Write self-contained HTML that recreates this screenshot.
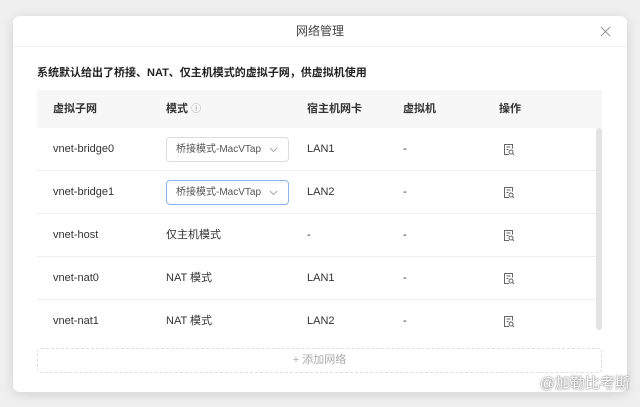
<!DOCTYPE html>
<html><head><meta charset="utf-8"><style>
*{margin:0;padding:0;box-sizing:border-box}
body{width:640px;height:407px;background:#efefef;font-family:"Liberation Sans","Noto Sans CJK SC",sans-serif;position:relative;overflow:hidden;color:#333}
.dlg{position:absolute;left:13px;top:16px;width:614px;height:376px;background:#fff;border-radius:7px;box-shadow:0 2px 12px rgba(0,0,0,.12)}
.title{position:absolute;left:0;right:0;top:0;height:31px;line-height:31px;text-align:center;font-size:12px;color:#444;border-bottom:1px solid #eee}
.x{position:absolute;right:16px;top:10px;width:11px;height:11px}
.sub{position:absolute;left:24px;top:49px;font-size:11px;font-weight:bold;color:#222;line-height:16px}
.thead{position:absolute;left:24px;top:74px;width:565px;height:38px;background:#f7f7f7;font-size:11px;font-weight:bold;color:#333;line-height:38px}
.c{position:absolute;white-space:nowrap;top:0}
.row{position:absolute;left:24px;width:559px;height:43px;border-bottom:1px solid #eee;font-size:11px;color:#333;line-height:42px}
.sel{position:absolute;left:129px;top:9px;width:123px;height:25px;border:1px solid #ddd;border-radius:4px;font-size:10px;color:#555;padding-left:9px;line-height:23px}
.sel.f{border-color:#8db4e8}
.sel svg{position:absolute;right:10px;top:9px}
.ic{position:absolute;left:466px;top:15px}
.sb{position:absolute;left:583px;top:112px;width:6px;height:202px;background:#e3e3e3;border-radius:3px}
.add{position:absolute;left:24px;top:332px;width:565px;height:25px;border:1px dashed #ddd;border-radius:4px;text-align:center;line-height:23px;font-size:11px;color:#aaa}
.wm{position:absolute;right:10px;top:372px;font-size:15px;color:#fff;text-shadow:0 0 2px #888,0 0 1px #666}
</style></head><body>
<div class="dlg">
<div class="title">网络管理</div>
<svg class="x" viewBox="0 0 12 12"><path d="M1 1L11 11M11 1L1 11" stroke="#888" stroke-width="1"/></svg>
<div class="sub">系统默认给出了桥接、NAT、仅主机模式的虚拟子网，供虚拟机使用</div>
<div class="thead">
<span class="c" style="left:16px">虚拟子网</span>
<span class="c" style="left:129px">模式 <span style="font-weight:normal;color:#999;font-size:10px">ⓘ</span></span>
<span class="c" style="left:270px">宿主机网卡</span>
<span class="c" style="left:366px">虚拟机</span>
<span class="c" style="left:462px">操作</span>
</div>
<div class="row" style="top:112px"><span class="c" style="left:16px">vnet-bridge0</span><div class="sel">桥接模式-MacVTap<svg width="9" height="6" viewBox="0 0 9 6"><path d="M1 1l3.5 3.5L8 1" stroke="#aaa" fill="none"/></svg></div><span class="c" style="left:270px">LAN1</span><span class="c" style="left:366px">-</span><svg class="ic" width="12" height="13" viewBox="0 0 12 13"><path d="M6 11.5H1.5V1.5h8v4M3.5 4h4M3.5 6.5h2" stroke="#666" fill="none"/><circle cx="8" cy="9" r="2" stroke="#666" fill="none"/><path d="M9.5 10.5l1.5 1.5" stroke="#666"/></svg></div>
<div class="row" style="top:155px"><span class="c" style="left:16px">vnet-bridge1</span><div class="sel f">桥接模式-MacVTap<svg width="9" height="6" viewBox="0 0 9 6"><path d="M1 1l3.5 3.5L8 1" stroke="#aaa" fill="none"/></svg></div><span class="c" style="left:270px">LAN2</span><span class="c" style="left:366px">-</span><svg class="ic" width="12" height="13" viewBox="0 0 12 13"><path d="M6 11.5H1.5V1.5h8v4M3.5 4h4M3.5 6.5h2" stroke="#666" fill="none"/><circle cx="8" cy="9" r="2" stroke="#666" fill="none"/><path d="M9.5 10.5l1.5 1.5" stroke="#666"/></svg></div>
<div class="row" style="top:198px"><span class="c" style="left:16px">vnet-host</span><span class="c" style="left:129px">仅主机模式</span><span class="c" style="left:270px">-</span><span class="c" style="left:366px">-</span><svg class="ic" width="12" height="13" viewBox="0 0 12 13"><path d="M6 11.5H1.5V1.5h8v4M3.5 4h4M3.5 6.5h2" stroke="#666" fill="none"/><circle cx="8" cy="9" r="2" stroke="#666" fill="none"/><path d="M9.5 10.5l1.5 1.5" stroke="#666"/></svg></div>
<div class="row" style="top:241px"><span class="c" style="left:16px">vnet-nat0</span><span class="c" style="left:129px">NAT 模式</span><span class="c" style="left:270px">LAN1</span><span class="c" style="left:366px">-</span><svg class="ic" width="12" height="13" viewBox="0 0 12 13"><path d="M6 11.5H1.5V1.5h8v4M3.5 4h4M3.5 6.5h2" stroke="#666" fill="none"/><circle cx="8" cy="9" r="2" stroke="#666" fill="none"/><path d="M9.5 10.5l1.5 1.5" stroke="#666"/></svg></div>
<div class="row" style="top:284px;border-bottom:none"><span class="c" style="left:16px">vnet-nat1</span><span class="c" style="left:129px">NAT 模式</span><span class="c" style="left:270px">LAN2</span><span class="c" style="left:366px">-</span><svg class="ic" width="12" height="13" viewBox="0 0 12 13"><path d="M6 11.5H1.5V1.5h8v4M3.5 4h4M3.5 6.5h2" stroke="#666" fill="none"/><circle cx="8" cy="9" r="2" stroke="#666" fill="none"/><path d="M9.5 10.5l1.5 1.5" stroke="#666"/></svg></div>
<div class="sb"></div>
<div class="add">+ 添加网络</div>
</div>
<div class="wm">@加勒比考斯</div>
</body></html>
